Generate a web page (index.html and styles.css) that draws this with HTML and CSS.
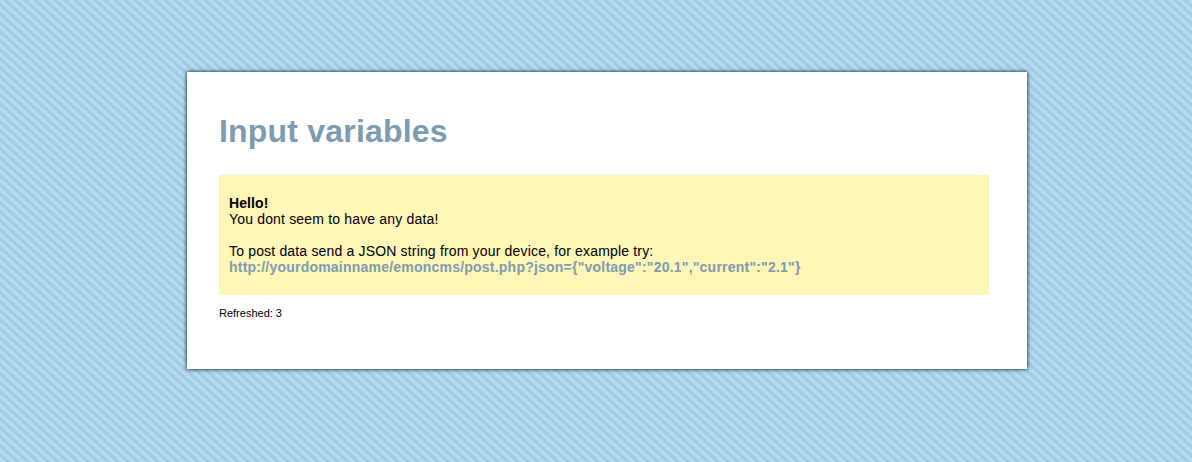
FILE: index.html
```html
<!DOCTYPE html>
<html lang="en">
<head>
<meta charset="utf-8">
<title>Input variables</title>
<link rel="stylesheet" href="styles.css">
</head>
<body>
<main class="panel">
  <h1 class="title">Input variables</h1>
  <div class="notice">
    <p class="message"><b class="greeting">Hello!</b><br>You dont seem to have any data!</p>
    <p class="message">To post data send a JSON string from your device, for example try:<br><b class="url">http://yourdomainname/emoncms/post.php?json={"voltage":"20.1","current":"2.1"}</b></p>
  </div>
  <div class="refreshed">Refreshed: 3</div>
</main>
</body>
</html>
```
FILE: styles.css
```css
* { box-sizing: border-box; }

body {
  margin: 0;
  min-height: 462px;
  padding-top: 72px;
  padding-left: 187px;
  overflow: hidden;
  font: 14px/16px "Liberation Sans", Arial, sans-serif;
  color: #000;
  background-color: #aad3ea;
  background-image: linear-gradient(to top right, #b4dbf0 0 7%, #a0c9e2 20% 30%, #b4dbf0 43% 57%, #a0c9e2 70% 80%, #b4dbf0 93%);
  background-size: 10px 9px;
}

.panel {
  width: 840px;
  height: 297px;
  padding: 41px 38px 0 32px;
  background: #fff;
  box-shadow: 0 0 4px #000;
}

.title {
  margin: 0 0 25px;
  font-size: 32px;
  line-height: 37px;
  letter-spacing: 0.2px;
  color: #7e9caf;
}

.notice {
  height: 120px;
  padding: 20px 10px;
  background: #fff6b8;
}

.message {
  margin: 0 0 16px;
  letter-spacing: 0.17px;
  white-space: nowrap;
}

.greeting { letter-spacing: 0.1px; }

.url {
  letter-spacing: 0.22px;
  color: #7e9caf;
}

.refreshed {
  margin-top: 12px;
  font-size: 11px;
  line-height: 13px;
}
```
